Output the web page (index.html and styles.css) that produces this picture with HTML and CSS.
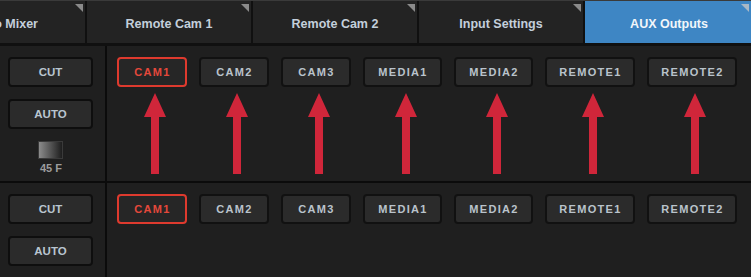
FILE: index.html
```html
<!DOCTYPE html>
<html lang="en">

<head>
    <meta charset="utf-8">
    <meta name="viewport" content="width=device-width, initial-scale=1.0">
    <title>AUX Outputs</title>

    <link rel="stylesheet" href="styles.css">
</head>

<body>
    <nav class="tabs">
        <div class="tab">Video Mixer</div>
        <div class="tab">Remote Cam 1</div>
        <div class="tab">Remote Cam 2</div>
        <div class="tab">Input Settings</div>
        <div class="tab valgt">AUX Outputs</div>
    </nav>

    <section class="row row-top">
        <div class="side">
            <button class="side-btn">CUT</button>
            <button class="side-btn">AUTO</button>
            <div class="fader"></div>
            <p class="frames">45 F</p>
        </div>
        <div class="sources">
            <div class="cell"><button class="src cam on">CAM1</button><svg class="arrow" viewBox="0 0 22 81"><path d="M11 0 L22 24 L15 24 L15 81 L7 81 L7 24 L0 24 Z"/></svg></div>
            <div class="cell"><button class="src cam">CAM2</button><svg class="arrow" viewBox="0 0 22 81"><path d="M11 0 L22 24 L15 24 L15 81 L7 81 L7 24 L0 24 Z"/></svg></div>
            <div class="cell"><button class="src cam">CAM3</button><svg class="arrow" viewBox="0 0 22 81"><path d="M11 0 L22 24 L15 24 L15 81 L7 81 L7 24 L0 24 Z"/></svg></div>
            <div class="cell"><button class="src media">MEDIA1</button><svg class="arrow" viewBox="0 0 22 81"><path d="M11 0 L22 24 L15 24 L15 81 L7 81 L7 24 L0 24 Z"/></svg></div>
            <div class="cell"><button class="src media">MEDIA2</button><svg class="arrow" viewBox="0 0 22 81"><path d="M11 0 L22 24 L15 24 L15 81 L7 81 L7 24 L0 24 Z"/></svg></div>
            <div class="cell"><button class="src remote">REMOTE1</button><svg class="arrow" viewBox="0 0 22 81"><path d="M11 0 L22 24 L15 24 L15 81 L7 81 L7 24 L0 24 Z"/></svg></div>
            <div class="cell"><button class="src remote">REMOTE2</button><svg class="arrow" viewBox="0 0 22 81"><path d="M11 0 L22 24 L15 24 L15 81 L7 81 L7 24 L0 24 Z"/></svg></div>
        </div>
    </section>

    <section class="row row-bottom">
        <div class="side">
            <button class="side-btn">CUT</button>
            <button class="side-btn">AUTO</button>
        </div>
        <div class="sources">
            <div class="cell"><button class="src cam on">CAM1</button></div>
            <div class="cell"><button class="src cam">CAM2</button></div>
            <div class="cell"><button class="src cam">CAM3</button></div>
            <div class="cell"><button class="src media">MEDIA1</button></div>
            <div class="cell"><button class="src media">MEDIA2</button></div>
            <div class="cell"><button class="src remote">REMOTE1</button></div>
            <div class="cell"><button class="src remote">REMOTE2</button></div>
        </div>
    </section>
</body>

</html>
```

FILE: styles.css
```css
* {
    box-sizing: border-box;
}

html,
body {
    margin: 0;
    height: 100%;
    overflow: hidden;
}

body {
    background-color: #0d0d0d;
    font-family: "Liberation Sans", Arial, sans-serif;
    font-weight: bold;
}

/* tab bar */
.tabs {
    display: flex;
    gap: 2px;
    margin-left: -79px;
    border-top: 1px solid #3a3a3a;
    padding-bottom: 3px;
    background-color: #101010;
}

.tab {
    position: relative;
    flex: 0 0 164px;
    height: 42px;
    padding-top: 3px;
    display: flex;
    align-items: center;
    justify-content: center;
    background-color: #232323;
    color: #c3cfdb;
    font-size: 12.5px;
}

.tab::after {
    content: "";
    position: absolute;
    top: 3px;
    right: 2px;
    border-top: 8px solid #8a8a8a;
    border-left: 8px solid transparent;
}

.tab.valgt {
    flex-basis: 168px;
    background-color: #3e86c4;
    color: #f2f6fa;
}

.tab.valgt::after {
    right: 4px;
    border-top-color: #a9b8c6;
}

/* rows */
.row {
    display: flex;
    background-color: #1f1f1f;
}

.row-top {
    height: 137px;
    border-bottom: 2px solid #0b0b0b;
}

.row-bottom {
    height: 100px;
}

.side {
    width: 107px;
    border-right: 2px solid #0b0b0b;
    padding: 11px 0 0 8px;
    display: flex;
    flex-direction: column;
    align-items: flex-start;
}

.side-btn {
    width: 85px;
    height: 30px;
    margin-bottom: 12px;
    border: 2px solid #0e0e0e;
    border-radius: 4px;
    background-color: #2b2b2b;
    color: #b9c5d0;
    font-family: inherit;
    font-weight: bold;
    font-size: 11.5px;
    padding: 0;
}

.fader {
    width: 25px;
    height: 18px;
    margin: 0 0 3px 30px;
    border: 1px solid #3a3a3a;
    background: linear-gradient(to right, #8c8c8c, #1e1e1e);
}

.frames {
    margin: 0 0 0 32px;
    color: #9c9c9c;
    font-size: 11px;
}

/* source buttons */
.sources {
    display: flex;
    align-items: flex-start;
    gap: 12px;
    padding: 11px 0 0 10px;
}

.cell {
    display: flex;
    flex-direction: column;
    align-items: center;
}

.src {
    height: 30px;
    border: 2px solid #111;
    border-radius: 4px;
    background-color: #2b2b2b;
    color: #bac3cb;
    font-family: inherit;
    font-weight: bold;
    font-size: 11px;
    letter-spacing: 1.3px;
    padding: 0 0 0 1px;
}

.cam {
    width: 70px;
}

.media {
    width: 79px;
}

.remote {
    width: 90px;
}

.src.on {
    border-color: #de3a2e;
    background-color: #262626;
    color: #e4483b;
}

.arrow {
    width: 22px;
    height: 81px;
    margin: 6px 0 0 6px;
    fill: #d0263a;
}
```
